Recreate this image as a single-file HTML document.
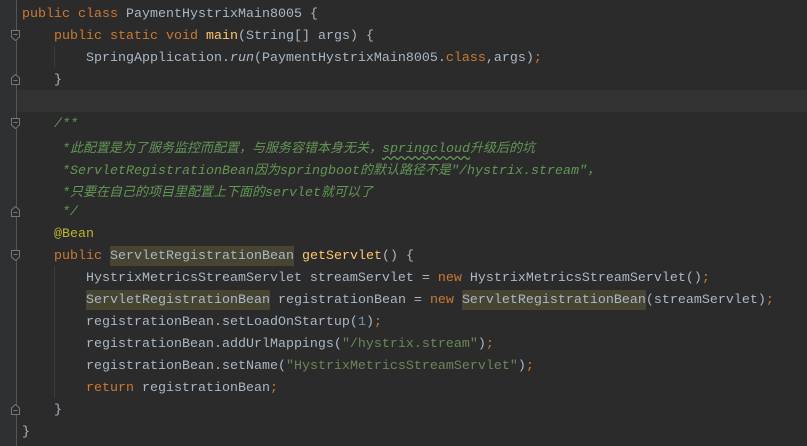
<!DOCTYPE html>
<html><head><meta charset="utf-8"><style>
html,body{margin:0;padding:0;}
body{width:807px;height:446px;background:#2b2b2b;position:relative;overflow:hidden;font-family:"Liberation Mono","Noto Sans CJK SC",monospace;font-size:13.33px;color:#a9b7c6;}
.gut{position:absolute;left:0;top:0;width:16px;height:446px;background:#2f3032;}
.gl{position:absolute;left:16px;top:0;width:1px;height:446px;background:#555;}
.cur{position:absolute;left:17px;top:90px;width:790px;height:22px;background:#323232;}
.l{position:absolute;left:22px;height:22px;line-height:22px;white-space:pre;margin-top:2px;}
.k{color:#cc7832}.m{color:#ffc66d}.c{color:#629755;font-style:italic}.s{color:#6a8759}.a{color:#bbb529}.n{color:#6897bb}
.h{background:#474432;padding:3px 0 2px 0;}
.z{font-size:13px;font-family:"Noto Sans CJK SC",sans-serif;}
.w{text-decoration:underline wavy #629755;text-underline-offset:3px}
.ig{position:absolute;width:1px;background:#3b3b3b;}
.f{position:absolute;left:11px;width:9px;height:11px;}
</style></head><body>
<div class="gut"></div><div class="gl"></div><div class="cur"></div>
<div class="ig" style="left:54px;top:46px;height:22px"></div>
<div class="ig" style="left:54px;top:266px;height:132px"></div>
<svg class="f" style="top:30px" viewBox="0 0 9 11"><path d="M0.5 0.5H8.5V7L4.5 10.5L0.5 7Z M2.5 4.5H6.5" fill="#2b2b2b" stroke="#777"/></svg>
<svg class="f" style="top:74px" viewBox="0 0 9 11"><path d="M0.5 10.5H8.5V4L4.5 0.5L0.5 4Z M2.5 6.5H6.5" fill="#2b2b2b" stroke="#777"/></svg>
<svg class="f" style="top:118px" viewBox="0 0 9 11"><path d="M0.5 0.5H8.5V7L4.5 10.5L0.5 7Z M2.5 4.5H6.5" fill="#2b2b2b" stroke="#777"/></svg>
<svg class="f" style="top:206px" viewBox="0 0 9 11"><path d="M0.5 10.5H8.5V4L4.5 0.5L0.5 4Z M2.5 6.5H6.5" fill="#2b2b2b" stroke="#777"/></svg>
<svg class="f" style="top:250px" viewBox="0 0 9 11"><path d="M0.5 0.5H8.5V7L4.5 10.5L0.5 7Z M2.5 4.5H6.5" fill="#2b2b2b" stroke="#777"/></svg>
<svg class="f" style="top:404px" viewBox="0 0 9 11"><path d="M0.5 10.5H8.5V4L4.5 0.5L0.5 4Z M2.5 6.5H6.5" fill="#2b2b2b" stroke="#777"/></svg>
<div class="l" style="top:2px"><span class="k">public class </span>PaymentHystrixMain8005 {</div>
<div class="l" style="top:24px">    <span class="k">public static void </span><span class="m">main</span>(String[] args) {</div>
<div class="l" style="top:46px">        SpringApplication.<i>run</i>(PaymentHystrixMain8005.<span class="k">class</span>,args)<span class="k">;</span></div>
<div class="l" style="top:68px">    }</div>
<div class="l" style="top:112px"><span class="c">    /**</span></div>
<div class="l" style="top:134px"><span class="c">     *<span class="z">此配置是为了服务监控而配置，与服务容错本身无关，</span><span class="w">springcloud</span><span class="z">升级后的坑</span></span></div>
<div class="l" style="top:156px"><span class="c">     *ServletRegistrationBean<span class="z">因为</span>springboot<span class="z">的默认路径不是</span>"/hystrix.stream"<span class="z">，</span></span></div>
<div class="l" style="top:178px"><span class="c">     *<span class="z">只要在自己的项目里配置上下面的</span>servlet<span class="z">就可以了</span></span></div>
<div class="l" style="top:200px"><span class="c">     */</span></div>
<div class="l" style="top:222px">    <span class="a">@Bean</span></div>
<div class="l" style="top:244px">    <span class="k">public </span><span class="h">ServletRegistrationBean</span> <span class="m">getServlet</span>() {</div>
<div class="l" style="top:266px">        HystrixMetricsStreamServlet streamServlet = <span class="k">new </span>HystrixMetricsStreamServlet()<span class="k">;</span></div>
<div class="l" style="top:288px">        <span class="h">ServletRegistrationBean</span> registrationBean = <span class="k">new </span><span class="h">ServletRegistrationBean</span>(streamServlet)<span class="k">;</span></div>
<div class="l" style="top:310px">        registrationBean.setLoadOnStartup(<span class="n">1</span>)<span class="k">;</span></div>
<div class="l" style="top:332px">        registrationBean.addUrlMappings(<span class="s">"/hystrix.stream"</span>)<span class="k">;</span></div>
<div class="l" style="top:354px">        registrationBean.setName(<span class="s">"HystrixMetricsStreamServlet"</span>)<span class="k">;</span></div>
<div class="l" style="top:376px">        <span class="k">return </span>registrationBean<span class="k">;</span></div>
<div class="l" style="top:398px">    }</div>
<div class="l" style="top:420px">}</div>
</body></html>
